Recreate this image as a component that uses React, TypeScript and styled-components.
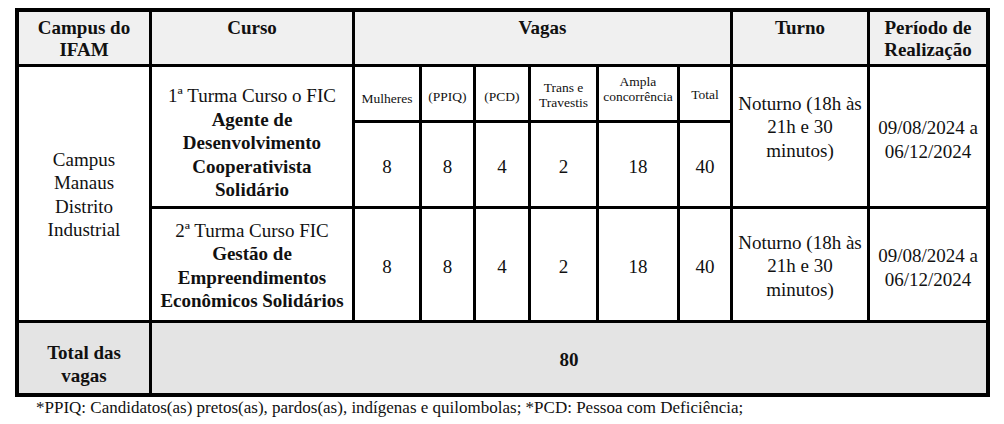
import React from "react";
import styled, { createGlobalStyle } from "styled-components";

const Global = createGlobalStyle`
  html, body { margin: 0; padding: 0; background: #fff; }
  body { font-family: "Liberation Serif", "Times New Roman", Times, serif; }
`;

const Page = styled.div`
  padding: 8px 0 0 15px;
  font-family: "Liberation Serif", "Times New Roman", Times, serif;
  color: #111;
`;

const Table = styled.div`
  display: grid;
  width: max-content;
  grid-template-columns: 130px 200px 64px 51px 52px 65px 78px 50px 134px 116px;
  grid-template-rows: 52px 53px 83px 111px 70px;
  gap: 3px;
  background: #000;
  border: 4px solid #000;
`;

type Tone = "head" | "total" | "plain";

const bg: Record<Tone, string> = {
  head: "#f0f0f0",
  total: "#e4e4e4",
  plain: "#ffffff",
};

const Cell = styled.div<{ $col: string; $row: string; $tone?: Tone; $lift?: number; $drop?: number }>`
  grid-column: ${(p) => p.$col};
  grid-row: ${(p) => p.$row};
  background: ${(p) => bg[p.$tone ?? "plain"]};
  display: flex;
  flex-direction: column;
  align-items: center;
  justify-content: center;
  text-align: center;
  font-size: 19px;
  line-height: 23.5px;
  padding: ${(p) => p.$drop ?? 0}px 2px ${(p) => p.$lift ?? 0}px;
  box-sizing: border-box;
`;

const HeadCell = styled(Cell)`
  justify-content: flex-start;
  padding-top: 5px;
  font-weight: bold;
  line-height: 22px;
`;

const SubHead = styled(Cell)`
  font-size: 13.5px;
  line-height: 15px;
`;

const Strong = styled.b`
  font-weight: bold;
`;

const Footnote = styled.p`
  margin: 1px 0 0 21px;
  font-size: 17px;
  line-height: 20px;
`;

const subHeads: { label: React.ReactNode; drop: number; lift: number }[] = [
  { label: <>Mulheres</>, drop: 10, lift: 0 },
  { label: <>(PPIQ)</>, drop: 6, lift: 0 },
  { label: <>(PCD)</>, drop: 6, lift: 0 },
  { label: <>Trans e<br />Travestis</>, drop: 2, lift: 0 },
  { label: <>Ampla<br />concorrência</>, drop: 0, lift: 9 },
  { label: <>Total</>, drop: 2, lift: 0 },
];

const counts = [8, 8, 4, 2, 18, 40];

export default function App() {
  return (
    <Page>
      <Global />
      <Table>
        <HeadCell $col="1" $row="1" $tone="head">Campus do<br />IFAM</HeadCell>
        <HeadCell $col="2" $row="1" $tone="head">Curso</HeadCell>
        <HeadCell $col="3 / 9" $row="1" $tone="head">Vagas</HeadCell>
        <HeadCell $col="9" $row="1" $tone="head">Turno</HeadCell>
        <HeadCell $col="10" $row="1" $tone="head">Período de<br />Realização</HeadCell>

        <Cell $col="1" $row="2 / 5" $drop={2}>Campus<br />Manaus<br />Distrito<br />Industrial</Cell>

        <Cell $col="2" $row="2 / 4" $drop={13}>
          <span>1ª Turma Curso o FIC</span>
          <Strong>Agente de<br />Desenvolvimento<br />Cooperativista<br />Solidário</Strong>
        </Cell>
        {subHeads.map((s, i) => (
          <SubHead key={i} $col={String(i + 3)} $row="2" $drop={s.drop} $lift={s.lift}>{s.label}</SubHead>
        ))}
        <Cell $col="9" $row="2 / 4" $lift={19}>Noturno (18h às<br />21h e 30<br />minutos)</Cell>
        <Cell $col="10" $row="2 / 4" $drop={6}>09/08/2024 a<br />06/12/2024</Cell>
        {counts.map((n, i) => (
          <Cell key={i} $col={String(i + 3)} $row="3" $drop={4}>{n}</Cell>
        ))}

        <Cell $col="2" $row="4" $drop={2}>
          <span>2ª Turma Curso FIC</span>
          <Strong>Gestão de<br />Empreendimentos<br />Econômicos Solidários</Strong>
        </Cell>
        {counts.map((n, i) => (
          <Cell key={i} $col={String(i + 3)} $row="4" $drop={5}>{n}</Cell>
        ))}
        <Cell $col="9" $row="4" $drop={3}>Noturno (18h às<br />21h e 30<br />minutos)</Cell>
        <Cell $col="10" $row="4" $drop={6}>09/08/2024 a<br />06/12/2024</Cell>

        <Cell $col="1" $row="5" $tone="total" $drop={12}>
          <Strong>Total das<br />vagas</Strong>
        </Cell>
        <Cell $col="2 / 11" $row="5" $tone="total" $drop={3}>
          <Strong>80</Strong>
        </Cell>
      </Table>
      <Footnote>
        *PPIQ: Candidatos(as) pretos(as), pardos(as), indígenas e quilombolas; *PCD: Pessoa com Deficiência;
      </Footnote>
    </Page>
  );
}
